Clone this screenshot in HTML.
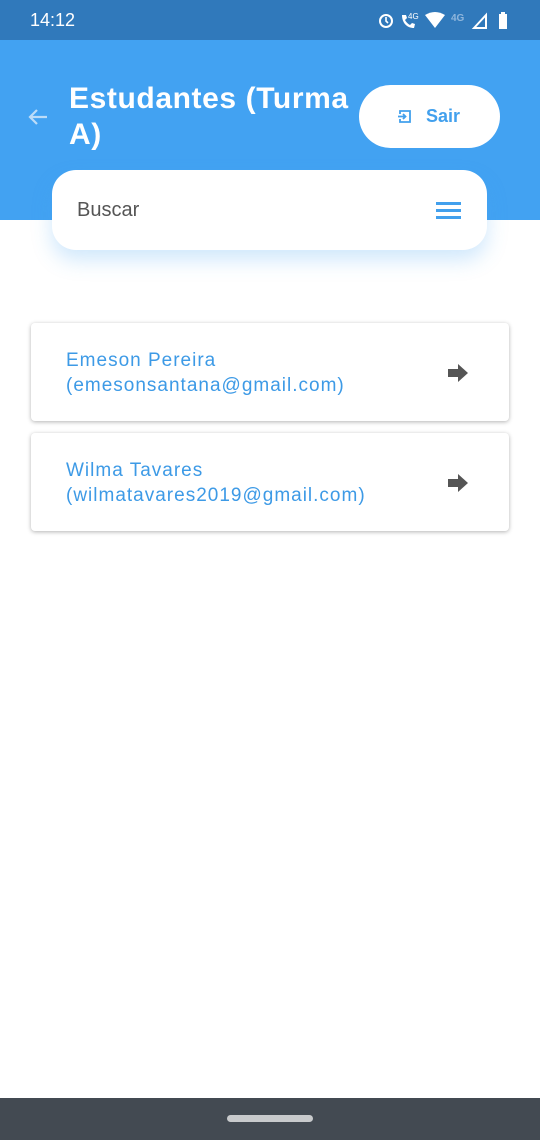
<!DOCTYPE html>
<html><head><meta charset="utf-8"><style>
*{margin:0;padding:0;box-sizing:border-box}
body{width:540px;height:1140px;position:relative;background:#fff;font-family:"Liberation Sans",sans-serif;overflow:hidden}
.sb{position:absolute;top:0;left:0;width:540px;height:40px;background:#3079bb;color:#fff}
.hd{position:absolute;top:40px;left:0;width:540px;height:180px;background:#42a2f2}
.title{position:absolute;left:69px;top:81px;color:#fff;font-weight:bold;font-size:30px;line-height:36px;width:300px;letter-spacing:0.6px}
.btn{position:absolute;left:359px;top:85px;width:141px;height:63px;border-radius:32px;background:#fff;color:#42a0ed;font-weight:bold;font-size:18px}
.search{position:absolute;left:52px;top:170px;width:435px;height:80px;border-radius:24px;background:#fff;box-shadow:0 10px 20px rgba(66,162,242,.25)}
.card{position:absolute;left:31px;width:478px;height:98px;background:#fff;border-radius:4px;box-shadow:0 1px 4px rgba(0,0,0,.3)}
.card .t{position:absolute;left:35px;top:25px;color:#3d9ae6;font-size:19px;line-height:25px;letter-spacing:1px}
.nav{position:absolute;bottom:0;left:0;width:540px;height:42px;background:#434a52}
</style></head><body>
<div class="sb">
<div style="position:absolute;left:30px;top:10px;font-size:18px">14:12</div>
<svg style="position:absolute;left:376px;top:9px" width="140" height="22" viewBox="0 0 140 22" fill="#fff">
<circle cx="10" cy="12" r="6" fill="none" stroke="#fff" stroke-width="2"/><path d="M10 8v4l2 2" stroke="#fff" stroke-width="1.6" fill="none"/>
<path d="M26 6c0 8 5 13 12 13l1-4-3-1-2 2c-2-1-4-3-5-5l2-2-1-3z"/><text x="32" y="10" font-size="8" fill="#fff" font-family="Liberation Sans">4G</text>
<path d="M49 6q10-6 20 0l-10 13z"/>
<text x="75" y="12" font-size="10" fill="#8fb6dc" font-family="Liberation Sans" font-weight="bold">4G</text>
<path d="M98 19l12-13v13z" fill="none" stroke="#fff" stroke-width="2"/>
<rect x="123" y="5" width="8" height="15"/><rect x="125" y="3" width="4" height="2"/>
</svg>
</div>
<div class="hd"></div>
<svg style="position:absolute;left:26px;top:105px" width="24" height="24" viewBox="0 0 24 24"><path d="M21 12H4M11 5l-7 7 7 7" stroke="#bcdcf8" stroke-width="2.2" fill="none"/></svg>
<div class="title">Estudantes (Turma A)</div>
<div class="btn"><svg style="position:absolute;left:38px;top:24px" width="15" height="15" viewBox="0 0 15 15"><path d="M3 5V2h10v11H3v-3M1 7.5h7M6 5l2.5 2.5L6 10" stroke="#42a0ed" stroke-width="1.8" fill="none"/></svg><span style="position:absolute;left:67px;top:21px">Sair</span></div>
<div class="search"><span style="position:absolute;left:25px;top:29px;font-size:20px;color:#555">Buscar</span>
<div style="position:absolute;left:384px;top:32px;width:25px;height:3px;background:#42a0ed;box-shadow:0 7px 0 #42a0ed,0 14px 0 #42a0ed"></div></div>
<div class="card" style="top:323px"><div class="t">Emeson Pereira<br>(emesonsantana@gmail.com)</div>
<svg style="position:absolute;left:416px;top:40px" width="22" height="20" viewBox="0 0 22 20"><path d="M1 6h10V1l10 9-10 9v-5H1z" fill="#555"/></svg></div>
<div class="card" style="top:433px"><div class="t">Wilma Tavares<br>(wilmatavares2019@gmail.com)</div>
<svg style="position:absolute;left:416px;top:40px" width="22" height="20" viewBox="0 0 22 20"><path d="M1 6h10V1l10 9-10 9v-5H1z" fill="#555"/></svg></div>
<div class="nav"><div style="position:absolute;left:227px;top:17px;width:86px;height:7px;border-radius:4px;background:#c8cacc"></div></div>
</body></html>
